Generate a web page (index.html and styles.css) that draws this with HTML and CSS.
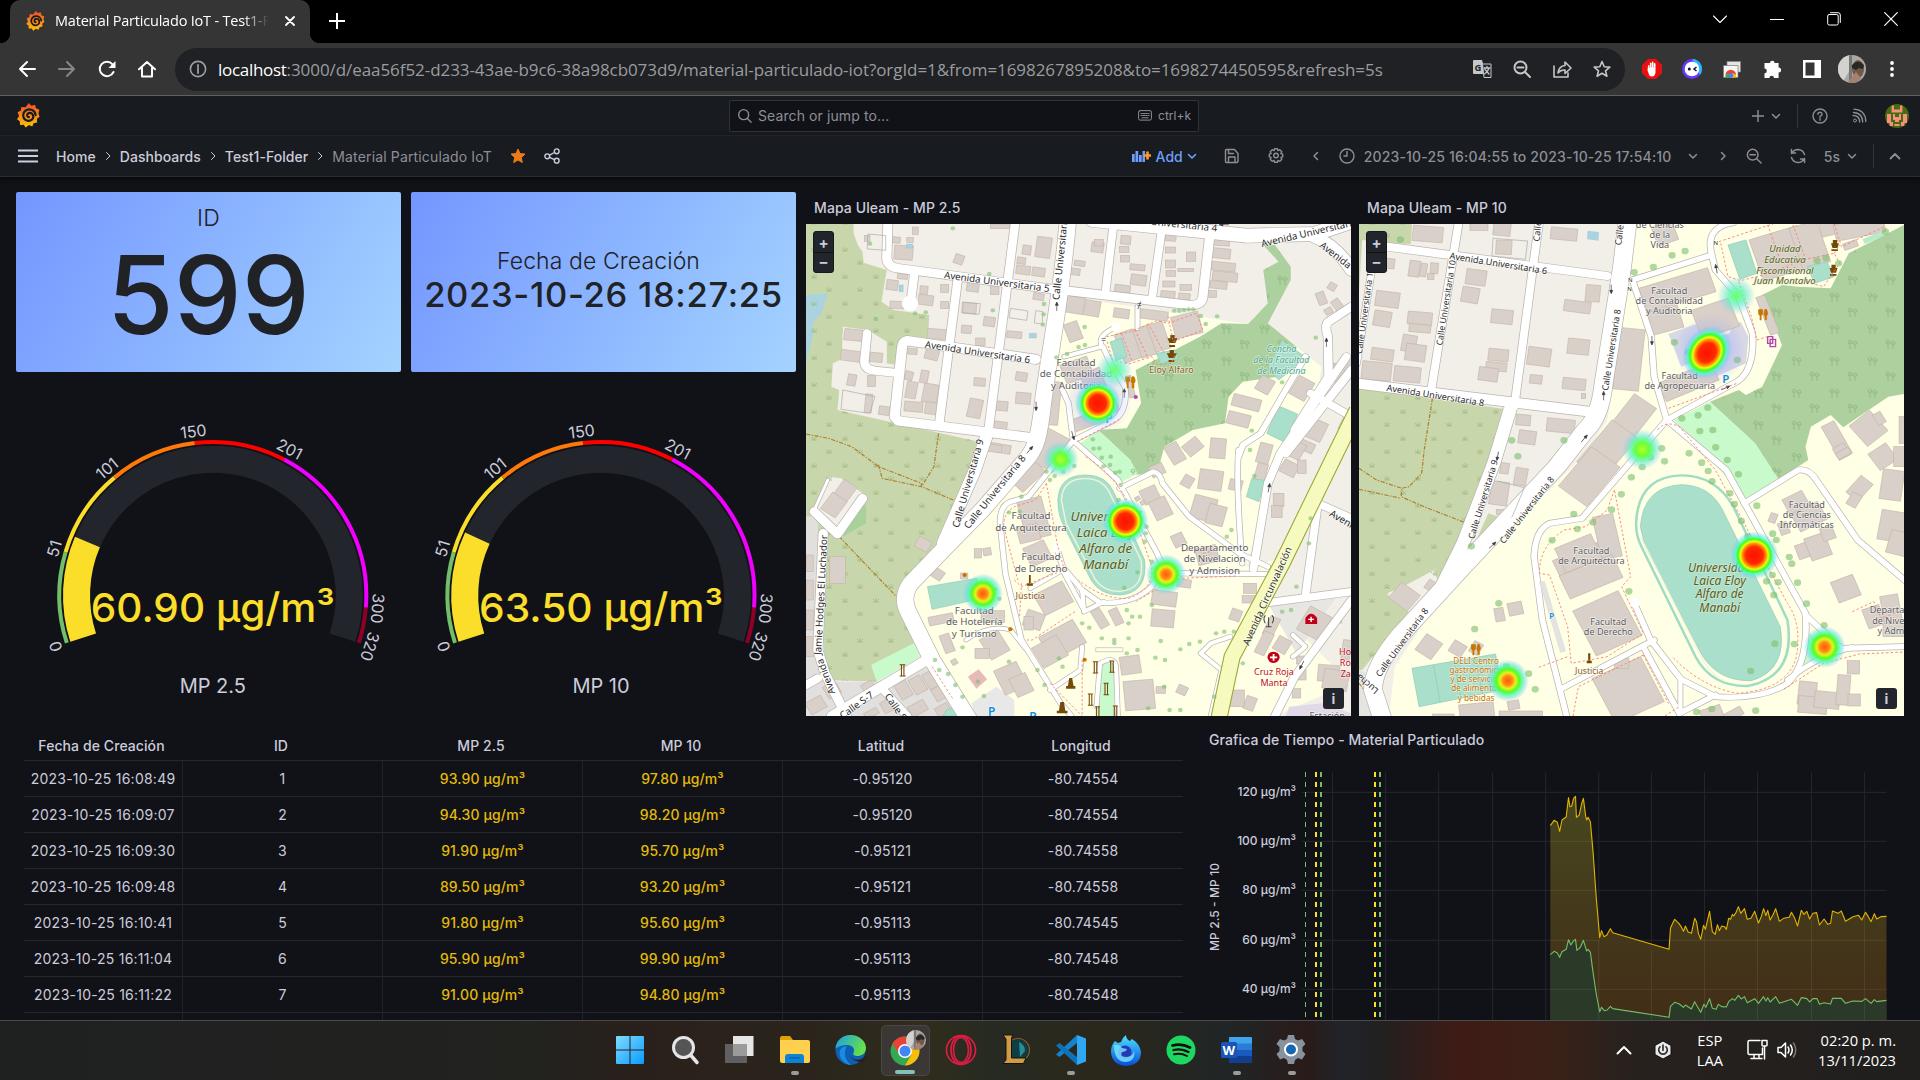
FILE: index.html
```html
<!DOCTYPE html>
<html lang="es">
<head>
<meta charset="utf-8">
<title>Material Particulado IoT</title>
<link rel="stylesheet" href="styles.css">
</head>
<body>
<svg class="defs" width="0" height="0">
  <defs>
    <linearGradient id="gLogo" x1="0" y1="0" x2="0" y2="1"><stop offset="0" stop-color="#f04e2a"/><stop offset="1" stop-color="#fcc30b"/></linearGradient>
    <symbol id="grafana" viewBox="0 0 24 26"><path fill="url(#gLogo)" d="M12.3 0l2.6 2.7 4-1 .9 3.8 3.6 1.6-1 3.7 1.2 3.6-2.8 2 .2 3.8-3.7.8-1.4 3.4-3.4-1.4-3.4 2.6-2.1-3-3.8.2-.3-3.8L0 16.800l2.200-3.300L.6 9.700l3.500-1.800.4-3.900 4.400.4z"/><path fill="none" stroke="#1a1b1f" stroke-width="2.300" stroke-linecap="round" d="M19.500 12.500c-.5-4-4-6-7-5.800-4 .3-6.300 3.300-6 6.600.3 3.500 3.200 5.600 6 5.300 3-.3 4.800-2.500 4.500-5-.3-2.300-2.200-3.600-4-3.400-1.700.2-2.600 1.600-2.400 2.900.2 1 1 1.600 1.800 1.500"/></symbol>
    <symbol id="down" viewBox="0 0 10 10"><path d="M1.500 3.500L5 7l3.500-3.500"/></symbol>
    <symbol id="right" viewBox="0 0 10 10"><path d="M3.500 1.500L7 5 3.500 8.500"/></symbol>
    <symbol id="mag" viewBox="0 0 18 18"><circle cx="8" cy="8" r="6"/><path d="M12.500 12.500L17 17"/></symbol>
    <symbol id="magout" viewBox="0 0 18 18"><circle cx="7.500" cy="7.500" r="6"/><path d="M12 12l5 5M4.500 7.500h6"/></symbol>
    <linearGradient id="fillY" x1="0" y1="0" x2="0" y2="1"><stop offset="0" stop-color="#46471f"/><stop offset="1" stop-color="#422d17"/></linearGradient>
    <pattern id="scrub" width="31" height="27" patternUnits="userSpaceOnUse"><path d="M8 8v-4M8 8l-3-3M8 8l3-3M5 8h6M23 21v-4M23 21l-3-3M23 21l3-3M20 21h6" stroke="#a3b883" fill="none" stroke-width=".8"/></pattern>
    <pattern id="wood" width="38" height="32" patternUnits="userSpaceOnUse"><path d="M8 14V8M6 8a2 3 0 1 1 4 0zM13 14V9M11 9a2 3 0 0 1 4 0zM26 29v-6M24 23a2 3 0 1 1 4 0zM31 29v-5M29 24a2 3 0 0 1 4 0z" stroke="#8bb37c" fill="none" stroke-width=".8"/></pattern>
    <radialGradient id="hot"><stop offset="0" stop-color="#f10"/><stop offset=".36" stop-color="#ff2a00"/><stop offset=".5" stop-color="#ff9a00"/><stop offset=".58" stop-color="#e8ff10"/><stop offset=".68" stop-color="#3dff20"/><stop offset=".8" stop-color="#50f5d0" stop-opacity=".75"/><stop offset="1" stop-color="#7ab8ff" stop-opacity="0"/></radialGradient>
    <radialGradient id="warm"><stop offset="0" stop-color="#ff5a10"/><stop offset=".22" stop-color="#ff8a10"/><stop offset=".38" stop-color="#e8f020"/><stop offset=".55" stop-color="#50ff20"/><stop offset=".73" stop-color="#50f5c0" stop-opacity=".75"/><stop offset="1" stop-color="#7ab8ff" stop-opacity="0"/></radialGradient>
    <radialGradient id="mild"><stop offset="0" stop-color="#b8ff20"/><stop offset=".35" stop-color="#66ff40"/><stop offset=".6" stop-color="#60f5b8" stop-opacity=".8"/><stop offset="1" stop-color="#7ac8ff" stop-opacity="0"/></radialGradient>
    <radialGradient id="cool"><stop offset="0" stop-color="#70ff60"/><stop offset=".4" stop-color="#60f8b8" stop-opacity=".8"/><stop offset="1" stop-color="#7ac8ff" stop-opacity="0"/></radialGradient>
    <radialGradient id="haze"><stop offset="0" stop-color="#8c9cff" stop-opacity=".38"/><stop offset=".6" stop-color="#8c9cff" stop-opacity=".25"/><stop offset="1" stop-color="#8c9cff" stop-opacity="0"/></radialGradient>
    <linearGradient id="blue" x1="0" y1="0" x2="1" y2="1"><stop offset="0" stop-color="#7fdcff"/><stop offset="1" stop-color="#0a9bff"/></linearGradient>
    <linearGradient id="edgeG" x1="0" y1="0" x2="1" y2=".3"><stop offset="0" stop-color="#1a9de8"/><stop offset="1" stop-color="#64e04c"/></linearGradient>
    <linearGradient id="fox" x1="0" y1="0" x2="0" y2="1"><stop offset="0" stop-color="#4be4ff"/><stop offset="1" stop-color="#0a4ad8"/></linearGradient>
    <clipPath id="round"><circle cx="14" cy="14" r="14"/></clipPath>
    <symbol id="photo" viewBox="0 0 28 28"><g clip-path="url(#round)"><path fill="#a9a8a4" d="M0 0h28v28H0z"/><path fill="#d2d2cf" d="M3 0h9v15L4 28H0V10z"/><path fill="#777" d="M11 0h3v28h-3z"/><ellipse cx="20" cy="14" rx="6" ry="9" fill="#73584a"/><path fill="#292626" d="M14 10q6-7 12 0l-1 4-4-1-3 2-4-2z"/><path fill="#a58270" d="M10 27l8-10 5 6-5 7z"/></g></symbol>
  </defs>
</svg>

<header class="tabstrip">
  <div class="tab">
    <svg class="fav" width="19" height="20"><use href="#grafana"/></svg>
    <span class="tab-title">Material Particulado IoT - Test1-Folder</span>
    <svg class="line white tab-x" width="10" height="10" viewBox="0 0 10 10"><path stroke-width="1.800" d="M1 1l8 8M9 1L1 9"/></svg>
  </div>
  <svg class="line white newtab" width="16" height="16" viewBox="0 0 16 16"><path stroke-width="2" d="M8 .5v15M.5 8h15"/></svg>
  <div class="winctl">
    <svg class="line white" width="14" height="14" viewBox="0 0 14 14"><path stroke-width="1.100" d="M.5 4L7 10.500 13.500 4"/></svg>
    <svg class="line white" width="14" height="14" viewBox="0 0 14 14"><path d="M.5 7.500h13" stroke-width="1.200"/></svg>
    <svg class="line white" width="14" height="14" viewBox="0 0 14 14"><rect x=".7" y="2.500" width="10.500" height="10.500" rx="1.500"/><path d="M3.500.7h7.500q2.300 0 2.300 2.300v7.500"/></svg>
    <svg class="line white" width="14" height="14" viewBox="0 0 14 14"><path stroke-width="1.200" d="M.7.7l12.600 12.600M13.300.7L.7 13.300"/></svg>
  </div>
</header>

<div class="toolbar">
  <div class="cells">
    <svg class="line white" width="18" height="18" viewBox="0 0 18 18"><path stroke-width="2" d="M17 9H2M9 2L2 9l7 7"/></svg>
    <svg class="line dim" width="18" height="18" viewBox="0 0 18 18"><path stroke-width="2" d="M1 9h15M9 2l7 7-7 7"/></svg>
    <svg class="line white" width="18" height="18" viewBox="0 0 18 18"><path stroke-width="2" d="M15.500 12A7.200 7.200 0 1 1 14.500 4.300"/><path fill="#fff" stroke="none" d="M17.500 1v7h-7z"/></svg>
    <svg class="line white" width="18" height="18" viewBox="0 0 18 18"><path stroke-width="2" d="M1 9.300L9 2l8 7.300M4 8v8.500h10V8"/></svg>
  </div>
  <div class="omnibox">
    <svg class="line info" width="18" height="18" viewBox="0 0 18 18"><circle cx="9" cy="9" r="7.600" stroke-width="1.600"/><path stroke-width="1.800" d="M9 8v5M9 4.800v1.600"/></svg>
    <div class="url"><b>localhost</b>:3000/d/eaa56f52-d233-43ae-b9c6-38a98cb073d9/material-particulado-iot?orgId=1&amp;from=1698267895208&amp;to=1698274450595&amp;refresh=5s</div>
    <div class="cells grey">
      <svg width="19" height="19" viewBox="0 0 19 19"><path fill="#c6c6c6" d="M1 0h8l4 14H1q-1 0-1-1V1q0-1 1-1z"/><path fill="#242527" stroke="#c6c6c6" d="M9.500 4H18v13.500H11z"/><path class="line" stroke="#c6c6c6" stroke-width="1.300" d="M11 8h6M14 6.500V8M16 8q-1 4-4.500 6M12 9.500l4 4.500"/><text x="1.500" y="10.500" font-size="9.500" font-weight="700" fill="#242527">G</text></svg>
      <svg class="line" width="18" height="18"><use href="#magout" stroke-width="2"/></svg>
      <svg class="line" width="19" height="18" viewBox="0 0 19 18"><path stroke-width="1.600" d="M1 6v11h14v-4M5 13q1-7 7-7.500V2l6 6-6 5.500V10q-4-.5-7 3z"/></svg>
      <svg class="line" width="18" height="18" viewBox="0 0 18 18"><path stroke-width="1.600" d="M9 1.500l2.200 5.200 5.600.4-4.300 3.700 1.400 5.500L9 13.300l-4.900 3 1.400-5.500L1.200 7.100l5.600-.4z"/></svg>
    </div>
  </div>
  <div class="cells ext">
    <svg width="20" height="20" viewBox="0 0 20 20"><path fill="#e9100f" d="M6 0h8l6 6v8l-6 6H6l-6-6V6z"/><path fill="#fff" d="M6 6.500q.8-.8 1.500 0V9h.4V4q.8-1 1.600 0v4.500h.4V3q.8-1 1.600 0v5.500h.4V4.500q.8-1 1.600 0v9Q13 17.500 10 17.500T6.500 14l-1-2.500z"/></svg>
    <svg width="20" height="20" viewBox="0 0 20 20"><circle cx="10" cy="10" r="10" fill="#6638ff"/><path fill="#24b8ff" d="M10 0a10 10 0 0 1 8 16z"/><circle cx="10" cy="10" r="7.300" fill="#fff"/><circle cx="7.300" cy="10" r="1.500" fill="#101030"/><path stroke="#101030" stroke-width="1.500" fill="none" d="M14.500 8L12 10l2.500 2"/></svg>
    <svg width="18" height="17" viewBox="0 0 18 17"><path fill="#e4e4e4" stroke="#888" stroke-width=".7" d="M4 .5h13.500V11H4z"/><path fill="#f6f6f6" stroke="#777" stroke-width=".7" d="M.5 4.500H15v12H.5z"/><path fill="#ea4335" d="M2.500 14a5.300 5.300 0 0 1 10.600 0L8 13z"/><path fill="#fbbc05" d="M9 12l4 1.500v3H9z"/><path fill="#34a853" d="M2.500 13.500L7 13v3.500H2.500z"/><circle cx="8" cy="14.300" r="2.200" fill="#4285f4"/></svg>
    <svg width="19" height="19" viewBox="0 0 19 19"><path fill="#fff" d="M7 3a2.300 2.300 0 0 1 4.600 0h4v4.500a2.400 2.400 0 0 1 0 5V18H11a2.300 2.300 0 0 0-4.600 0H1.500v-4.800a2.300 2.300 0 0 0 0-4.600V3z"/></svg>
    <svg width="18" height="18" viewBox="0 0 18 18"><path fill="#fff" d="M0 0h18v18H0z"/><path fill="#353535" d="M2.500 2.500h9v13h-9z"/></svg>
    <svg width="28" height="28"><use href="#photo"/></svg>
    <svg width="6" height="18" viewBox="0 0 6 18"><g fill="#fff"><circle cx="3" cy="3" r="1.900"/><circle cx="3" cy="9" r="1.900"/><circle cx="3" cy="15" r="1.900"/></g></svg>
  </div>
</div>

<nav class="topnav">
  <svg class="logo" width="23" height="25"><use href="#grafana"/></svg>
  <div class="search">
    <svg class="line" width="15" height="15"><use href="#mag" stroke-width="1.600"/></svg>
    <span>Search or jump to...</span>
    <svg class="line kb" width="14" height="11" viewBox="0 0 14 11"><rect x=".6" y=".6" width="12.800" height="9.500" rx="1.500"/><path d="M3 3.500h8M3 5.500h8" stroke-dasharray="1.300 1"/><path d="M4 7.800h6"/></svg>
    <small>ctrl+k</small>
  </div>
  <div class="top-actions">
    <svg class="line" width="12" height="12" viewBox="0 0 12 12"><path stroke-width="1.400" d="M6 0v12M0 6h12"/></svg>
    <svg class="line" width="10" height="10"><use href="#down" stroke-width="1.500"/></svg>
    <i class="rule"></i>
    <svg class="line" width="16" height="16" viewBox="0 0 16 16"><circle cx="8" cy="8" r="7" stroke-width="1.400"/><path stroke-width="1.400" d="M5.900 6.300q.2-2 2.100-2t2.100 1.900Q10 7.300 8 8.300v.9M8 10.800v1.400"/></svg>
    <svg class="line" width="15" height="15" viewBox="0 0 15 15"><circle cx="3" cy="12.500" r="1.500"/><path stroke-width="1.300" d="M1 7.500Q7.500 7.500 7.700 14M1.500 4.500Q10.500 5 10.700 14M2 1.200Q13.500 2 13.800 13.500"/></svg>
    <svg width="24" height="24" viewBox="0 0 12 12"><circle cx="6" cy="6" r="6" fill="#456a10"/><path fill="#f5907c" d="M3.300.7h1.200v2h3v-2h1.200v3.600H3.300zM1 5h2v4h1v2H2.300V9.500H1zM11 5H9v4H8v2h1.700V9.500H11zM4 5h1v1.500h2V5h1v3H7v1H5V8H4zM4.700 10h2.600v1H4.700z"/></svg>
  </div>
</nav>

<nav class="crumbs">
  <svg class="menu" width="20" height="14" viewBox="0 0 20 14"><path stroke="#ccccdc" stroke-width="1.800" d="M0 1.500h20M0 7h20M0 12.500h20"/></svg>
  <span>Home</span><svg class="line sep" width="10" height="10"><use href="#right"/></svg>
  <span>Dashboards</span><svg class="line sep" width="10" height="10"><use href="#right"/></svg>
  <span>Test1-Folder</span><svg class="line sep" width="10" height="10"><use href="#right"/></svg>
  <span class="current">Material Particulado IoT</span>
  <svg class="star" width="16" height="16" viewBox="0 0 16 16"><path fill="#eb7b18" stroke="#eb7b18" stroke-linejoin="round" d="M8 1l2 4.600 5 .5-3.700 3.400 1 5L8 12l-4.300 2.500 1-5L1 6.100l5-.5z"/></svg>
  <svg class="line share" width="16" height="16" viewBox="0 0 16 16"><g stroke-width="1.400"><circle cx="3.300" cy="8.300" r="2.400"/><circle cx="12.700" cy="3.300" r="2.400"/><circle cx="12.700" cy="12.700" r="2.400"/><path d="M5.500 7.200l5-2.700M5.500 9.400l5 2.300"/></g></svg>
  <div class="dash-actions">
    <svg width="19" height="12" viewBox="0 0 19 12"><path fill="#6e9fff" d="M0 4h2.700v8H0zM3.500 1h2.700v11H3.500zM7 5h2.700v7H7zM10.500 1h2.500v11h-2.500z"/><path stroke="#ff9830" stroke-width="2.600" d="M15.500 1.500v8M11.800 5.500H19"/></svg>
    <span class="add">Add</span>
    <svg class="line blue" width="10" height="10"><use href="#down" stroke-width="1.600"/></svg>
    <svg class="line" width="16" height="16" viewBox="0 0 16 16"><path stroke-width="1.400" d="M2.500 1.500h8l3.500 4v7.500q0 1.500-1.500 1.500h-10q-1 0-1-1v-11q0-1 1-1zM4.500 14v-5h6.500v5M4.500 1.500v4h5"/></svg>
    <svg class="line" width="16" height="16" viewBox="0 0 16 16"><circle cx="8" cy="7.500" r="2.300" stroke-width="1.400"/><path stroke-width="1.400" d="M6.600.8h2.800l.5 1.800 1.900-.9 2 2-.9 1.900 1.800.5v2.800l-1.800.5.9 1.900-2 2-1.900-.9-.5 1.800H6.600l-.5-1.800-1.900.9-2-2 .9-1.900-1.800-.5V6.100l1.800-.5-.9-1.900 2-2 1.900.9z"/></svg>
    <svg class="line" width="10" height="10" viewBox="0 0 10 10"><path stroke-width="1.500" d="M6.500 1.500L3 5l3.500 3.500"/></svg>
    <svg class="line" width="16" height="16" viewBox="0 0 16 16"><circle cx="8" cy="8" r="7" stroke-width="1.400"/><path stroke-width="1.400" d="M8 3.500V8H5"/></svg>
    <span class="range">2023-10-25 16:04:55 to 2023-10-25 17:54:10</span>
    <svg class="line" width="10" height="10"><use href="#down" stroke-width="1.500"/></svg>
    <svg class="line" width="10" height="10"><use href="#right" stroke-width="1.500"/></svg>
    <svg class="line" width="16" height="16"><use href="#magout" stroke-width="1.600"/></svg>
    <svg class="line" width="16" height="16" viewBox="0 0 16 16"><path stroke-width="1.500" d="M1.500 5.500v-4M1.500 5h4M2 5Q4 1.500 8 1.500q5 .2 6.500 5M14.500 10.500v4M14.500 11h-4M14 11q-2 3.500-6 3.500-5-.2-6.500-5"/></svg>
    <span>5s</span>
    <svg class="line" width="10" height="10"><use href="#down" stroke-width="1.500"/></svg>
    <i class="rule"></i>
    <svg class="line" width="12" height="12" viewBox="0 0 12 12"><path stroke-width="1.800" d="M1.500 8.500L6 4l4.500 4.500"/></svg>
  </div>
</nav>

<main class="dash">
  <section class="left">
    <div class="stat one"><span>ID</span><strong>599</strong></div>
    <div class="stat two"><span>Fecha de Creación</span><strong>2023-10-26 18:27:25</strong></div>
    <svg class="gauges" width="780" height="334" viewBox="16 382 780 334">
      <g id="gaugeA"></g>
      <g id="gaugeB"></g>
    </svg>
  </section>
  <section class="map-panel">
    <h2>Mapa Uleam - MP 2.5</h2>
    <div class="map">
      <svg id="map1" width="545" height="492" viewBox="806 224 545 492"></svg>
      <div class="zoomer"><b>+</b><b>–</b></div><div class="attr">i</div>
    </div>
  </section>
  <section class="map-panel second">
    <h2>Mapa Uleam - MP 10</h2>
    <div class="map">
      <svg id="map2" width="545" height="492" viewBox="1359 224 545 492"></svg>
      <div class="zoomer"><b>+</b><b>–</b></div><div class="attr">i</div>
    </div>
  </section>
  <section class="table-panel">
    <table>
      <thead><tr><th>Fecha de Creación</th><th>ID</th><th>MP 2.5</th><th>MP 10</th><th>Latitud</th><th>Longitud</th></tr></thead>
      <tbody>
        <tr><td>2023-10-25 16:08:49</td><td>1</td><td>93.90 μg/m³</td><td>97.80 μg/m³</td><td>-0.95120</td><td>-80.74554</td></tr>
        <tr><td>2023-10-25 16:09:07</td><td>2</td><td>94.30 μg/m³</td><td>98.20 μg/m³</td><td>-0.95120</td><td>-80.74554</td></tr>
        <tr><td>2023-10-25 16:09:30</td><td>3</td><td>91.90 μg/m³</td><td>95.70 μg/m³</td><td>-0.95121</td><td>-80.74558</td></tr>
        <tr><td>2023-10-25 16:09:48</td><td>4</td><td>89.50 μg/m³</td><td>93.20 μg/m³</td><td>-0.95121</td><td>-80.74558</td></tr>
        <tr><td>2023-10-25 16:10:41</td><td>5</td><td>91.80 μg/m³</td><td>95.60 μg/m³</td><td>-0.95113</td><td>-80.74545</td></tr>
        <tr><td>2023-10-25 16:11:04</td><td>6</td><td>95.90 μg/m³</td><td>99.90 μg/m³</td><td>-0.95113</td><td>-80.74548</td></tr>
        <tr><td>2023-10-25 16:11:22</td><td>7</td><td>91.00 μg/m³</td><td>94.80 μg/m³</td><td>-0.95113</td><td>-80.74548</td></tr>
        <tr><td></td><td></td><td></td><td></td><td></td><td></td></tr>
      </tbody>
    </table>
  </section>
  <section class="chart-panel">
    <h2>Grafica de Tiempo - Material Particulado</h2>
    <svg width="704" height="264" viewBox="1200 756 704 264">
      <g transform="translate(1190 720) scale(.46556 .33333)" class="plot">
        <path class="grid" d="M306 157V900M420 157V900M534 157V900M650 157V900M764 157V900M878 157V900M991 157V900M1105 157V900M1219 157V900M1335 157V900M1449 157V900M240 217H1496M240 364H1496M240 511H1496M240 661H1496M240 808H1496"/>
        <path id="areaY" fill="url(#fillY)"/><path id="areaG" fill="#2b3a28"/>
        <path class="grid over" d="M878 660V900M991 690V900M1105 640V900M1219 600V900M1335 600V900M1449 590V900M774 364H863M774 511H871M1032 661H1496M774 661H880M774 808H1496"/>
        <path id="lineY" class="series" stroke="#e0b400"/><path id="lineG" class="series" stroke="#73bf69"/>
      </g>
      <g stroke-dasharray="5 5"><path stroke="#73bf69" d="M1305.500 772V1017"/><path stroke="#fade2a" stroke-width="2" d="M1316 772V1017M1375 772V1017"/><path stroke="#73bf69" stroke-width="2" d="M1321 772V1017M1380 772V1017"/></g>
      <g class="axis"><text x="1296" y="796">120 μg/m³</text><text x="1296" y="845">100 μg/m³</text><text x="1296" y="894">80 μg/m³</text><text x="1296" y="944">60 μg/m³</text><text x="1296" y="993">40 μg/m³</text></g>
      <text class="ylabel" transform="translate(1219 907) rotate(-90)" textLength="88">MP 2.5 - MP 10</text>
    </svg>
  </section>
</main>

<footer class="taskbar">
  <div class="apps">
    <span><svg width="30" height="30" viewBox="0 0 30 30"><path fill="url(#blue)" d="M1 2q0-1 1-1h12.500v13.500H1zM15.500 1H28q1 0 1 1v12.500H15.500zM1 15.500h13.500V29H2q-1 0-1-1zM15.500 15.500H29V28q0 1-1 1H15.500z"/></svg></span>
    <span><svg width="30" height="30" viewBox="0 0 30 30"><circle cx="13.500" cy="12.500" r="10" fill="#555" stroke="#e6e6ea" stroke-width="3"/><path stroke="#e6e6ea" stroke-width="3.500" stroke-linecap="round" d="M21 20.500l6 7"/></svg></span>
    <span><svg width="30" height="30" viewBox="0 0 30 30"><path fill="#e6e6e6" d="M8 1h20.500v20H8z"/><path fill="#606062" d="M0 9h22v19H0z"/><path fill="#9b9b9b" d="M8 9h14v12H8z"/></svg></span>
    <span class="run"><svg width="30" height="30" viewBox="0 0 30 30"><path fill="#e0a106" d="M0 3q0-2 2-2h8l3 4v5H0z"/><path fill="#ffd04e" d="M0 5h28q2 0 2 2v19q0 2-2 2H2q-2 0-2-2z"/><path fill="#0b84d8" d="M5 28v-6q0-3 3-3h13q3 0 3 3v6z"/><path stroke="#0a5a9a" stroke-width="1.200" d="M9 23h11"/></svg></span>
    <span><svg width="31" height="30" viewBox="0 0 31 30"><circle cx="15.500" cy="15" r="15" fill="#0d5fb4"/><path fill="url(#edgeG)" d="M.5 14C1 5 8 0 15.500 0 24 0 31 6 31 13c0 6-5 8-8.500 8-3 0-5-1-4-3 2-4-1-8-6-8C7 10 2 12 .5 14z"/><path fill="#1b8be0" d="M12 11c-8 0-10 9-4 15 2 2 5 4 8 4-6-5-8-12-4-19z"/><path fill="#26221f" d="M14.500 20c2 4 7 6 12 4l4-3v4l-3 3-3-1c-5-1-9-4-10-7z"/></svg></span>
    <span class="run active"><svg width="36" height="38" viewBox="0 0 36 38"><circle cx="15" cy="23" r="14.500" fill="#34a853"/><path fill="#ea4335" d="M2.500 15.500A14.500 14.500 0 0 1 27.600 15.800L15 16z M2.500 15.500l7 11L15 16z"/><path fill="#fbbc05" d="M15 16h12.700A14.500 14.500 0 0 1 15 37.500l6.500-11z"/><circle cx="15" cy="23" r="7" fill="#fff"/><circle cx="15" cy="23" r="5.500" fill="#4285f4"/><svg x="16" y="2" width="20" height="20"><use href="#photo"/></svg></svg></span>
    <span><svg width="32" height="32" viewBox="0 0 32 32"><g fill="none" stroke="#e01b45" stroke-width="1.700"><circle cx="16" cy="16" r="14.500"/><ellipse cx="16" cy="16" rx="7.500" ry="12.500"/><ellipse cx="16" cy="16" rx="10" ry="14"/></g></svg></span>
    <span><svg width="28" height="32" viewBox="0 0 28 32"><circle cx="16" cy="16" r="10" fill="#0d3e46"/><circle cx="16" cy="16" r="11.500" fill="none" stroke="#87612f" stroke-width="1.200"/><path fill="#2b8b91" d="M17 8q6 3 6 9l-5 6z"/><path fill="#d39a45" stroke="#16120e" d="M1 1h10l-1.500 3v20H24l-2.500 5.500H1L4 26V5z"/></svg></span>
    <span class="run"><svg width="30" height="30" viewBox="0 0 30 30"><path fill="#1583cc" d="M21 0v8L3.500 22 0 19.500z"/><path fill="#0f72b8" d="M3.500 8L21 22v8L0 10.500z"/><path fill="#2fa8f4" d="M21 0l9 3.500v23L21 30z"/></svg></span>
    <span><svg width="30" height="31" viewBox="0 0 30 31"><path fill="url(#fox)" d="M4 6l3 2 3-1q2-5 5-7 0 4 4 6l2-2q8 5 9 13 0 13-15 14Q1 30 0 17q0-7 4-11z"/><circle cx="14" cy="17" r="6.500" fill="#2539b8"/><path fill="#7ce6ff" d="M3 10q5-1 8 3l5 1q-1 3-5 3-3 5 5 5 7-1 7-7 2 11-8 12Q3 27 3 10z" opacity=".8"/></svg></span>
    <span><svg width="30" height="30" viewBox="0 0 30 30"><circle cx="15" cy="15" r="14.500" fill="#1ed760"/><g stroke="#111" fill="none" stroke-linecap="round"><path stroke-width="2.800" d="M6.500 10.500q9-2.500 17.500 2"/><path stroke-width="2.300" d="M7.500 15q8-2 15 2"/><path stroke-width="2" d="M8 19.300q7-1.700 13 1.700"/></g></svg></span>
    <span class="run"><svg width="31" height="28" viewBox="0 0 31 28"><path fill="#41a5ee" d="M8 1h22q1 0 1 1v6H8z"/><path fill="#2b7cd3" d="M8 7.500h23V14H8z"/><path fill="#185abd" d="M8 14h23v6.500H8z"/><path fill="#103f91" d="M8 20.500h23V26q0 1-1 1H8z"/><rect y="6" width="16" height="16" rx="1.500" fill="#1a55b5"/><text x="1.500" y="18.500" fill="#fff" font-size="13" font-weight="700">W</text></svg></span>
    <span class="run"><svg width="30" height="30" viewBox="0 0 30 30"><path fill="#87929c" d="M12 0h6l1 4 3 1.500 4-1.500 3.500 5-3 3v4l3 3-3.500 5.500-4-1.500-3 2-1 4h-6l-1-4-3-2-4 1.500L.5 19l3-3v-4l-3-3L4 4l4 1.500L11 4z"/><circle cx="15" cy="14.500" r="6" fill="#1367b3" stroke="#fff" stroke-width="2"/></svg></span>
  </div>
  <div class="tray">
    <svg class="line white" width="16" height="10" viewBox="0 0 16 10"><path stroke-width="2" d="M1.500 8.500L8 2l6.500 6.500"/></svg>
    <svg width="18" height="20" viewBox="0 0 18 20"><path fill="#e9e9e9" stroke="#111" d="M9 1l8 4.500v9L9 19l-8-4.500v-9z"/><path fill="none" stroke="#333" stroke-width="1.700" stroke-linecap="round" d="M6 6.800a4.300 4.300 0 1 0 6 0M9 5.200v5"/></svg>
    <p>ESP<br>LAA</p>
    <svg class="line white" width="21" height="21" viewBox="0 0 21 21"><g stroke-width="1.500"><path d="M13 1.500H2.500q-1.500 0-1.500 1.500v11q0 1.500 1.500 1.500h13V9M4 19.500h11M7 16v3M12 16v3"/><path d="M15 1.500h5v4.500q0 1-1 1h-3q-1 0-1-1zM17.500 7v13"/></g></svg>
    <svg class="line white" width="21" height="18" viewBox="0 0 21 18"><g stroke-width="1.500"><path d="M1 6.500h3L8.500 2v14L4 11.500H1zM11 6q2 3 0 6M13.500 4q3.500 5 0 10"/><path stroke="#777" d="M16.500 2q4.500 7 0 14"/></g></svg>
    <p class="clock">02:20 p. m.<br>13/11/2023</p>
  </div>
</footer>
<script src="script.js"></script>
</body>
</html>
```
FILE: styles.css
```css
* { box-sizing: border-box; }
body { margin: 0; width: 1920px; height: 1080px; overflow: hidden; background: #111217; color: #ccccdc; font: 14px Inter, "Noto Sans", sans-serif; display: flex; flex-direction: column; }
svg { display: block; flex: none; }
.defs { position: absolute; }
.line { fill: none; stroke: currentColor; stroke-linecap: round; stroke-linejoin: round; }
.white { color: #fff; }
.dim { color: #868686; }

.tabstrip { height: 43px; background: #000; display: flex; align-items: center; font-family: "Open Sans", sans-serif; }
.tab { align-self: stretch; width: 300px; margin-left: 10px; background: #353535; border-radius: 10px 10px 0 0; display: flex; align-items: center; padding: 0 0 2px 16px; position: relative; }
.tab::before, .tab::after { content: ""; position: absolute; bottom: 0; width: 10px; height: 10px; }
.tab::before { left: -10px; background: radial-gradient(circle at 0 0, #000 10px, #353535 10.5px); }
.tab::after { right: -10px; background: radial-gradient(circle at 100% 0, #000 10px, #353535 10.5px); }
.tab-title { color: #fff; font-size: 14.5px; letter-spacing: -.2px; width: 214px; margin-left: 10px; white-space: nowrap; overflow: hidden; -webkit-mask-image: linear-gradient(90deg, #000 88%, transparent); mask-image: linear-gradient(90deg, #000 88%, transparent); }
.tab-x { margin-left: 16px; }
.newtab { margin-left: 19px; margin-bottom: 1px; }
.winctl { margin-left: auto; margin-right: 1px; display: grid; grid-template-columns: repeat(4, 57px); justify-items: center; padding-bottom: 6px; }

.toolbar { height: 53px; background: #353535; border-bottom: 1px solid #5f6062; display: flex; align-items: center; padding-left: 7px; }
.cells { display: grid; grid-auto-flow: column; grid-auto-columns: 40px; place-items: center; }
.omnibox { height: 43px; width: 1450px; margin-left: 8px; padding: 0 3px 0 14px; background: #202124; border-radius: 22px; display: flex; align-items: center; font-family: "Open Sans", sans-serif; }
.info { color: #9aa0a6; }
.url { margin-left: 11px; flex: 1; color: #9a9c9f; font-size: 17px; letter-spacing: -.065px; white-space: nowrap; }
.url b { color: #fff; font-weight: 400; letter-spacing: -.3px; }
.grey { color: #c6c6c6; }
.ext { margin-left: 7px; }

.topnav { height: 40px; background: #181b1f; border-bottom: 1px solid #2b2d32; display: flex; align-items: center; padding-left: 17px; color: #8e8e98; }
.search { width: 470px; height: 32px; margin-left: 689px; background: #111217; border: 1px solid #303238; border-radius: 2px; display: flex; align-items: center; padding: 0 7px; }
.search span { margin-left: 6px; letter-spacing: .1px; }
.search .kb { margin-left: auto; }
.search small { font-size: 12px; margin-left: 6px; }
.top-actions { margin-left: auto; display: grid; grid-template-columns: 19px 26px 15px 40px 33px 35px; align-items: center; }
.rule { display: block; width: 1px; height: 24px; background: #34363b; }

.crumbs { height: 41px; background: #181b1f; border-bottom: 1px solid #2b2d32; box-shadow: 0 1px 4px 1px #0008; display: flex; align-items: center; padding-left: 18px; font-weight: 500; letter-spacing: .05px; position: relative; }
.menu { margin-right: 18px; }
.sep { margin: 0 7px; }
.current { color: #8e8e98; font-weight: 400; letter-spacing: .15px; }
.star { margin-left: 18px; }
.share { margin-left: 18px; }
.dash-actions { margin-left: auto; color: #8e8e98; display: grid; grid-template-columns: 24px 31.5px 37px 44px 43px 28px 24.7px 324.3px 30px 28px 44px 33.7px 23.3px 26px 16px 31px; align-items: center; white-space: nowrap; }
.add, .blue { color: #6e9fff; }
.range { letter-spacing: .17px; }

.dash { height: 843px; padding: 15px 16px 0; display: grid; grid-template-columns: 780px 10px 378px 16px 151px 8px 545px; grid-template-rows: 524px 304px; overflow: hidden; }
.left { grid-column: 1; display: grid; grid-template-columns: 385px 385px; grid-template-rows: 180px 334px; gap: 10px; }
.stat { background: linear-gradient(120deg, #7396ff, #a4d3ff); border-radius: 2px; color: #202226; display: flex; flex-direction: column; align-items: center; white-space: nowrap; }
.stat span { font-size: 23px; line-height: 26px; font-weight: 300; letter-spacing: .1px; }
.stat strong { font-weight: 500; }
.one { padding-top: 13px; }
.one strong { font-size: 108px; line-height: 128px; }
.two { padding-top: 56px; }
.two span { margin-right: 10px; }
.two strong { font-size: 34.5px; line-height: 41px; letter-spacing: .7px; }
.gauges { grid-column: 1 / 3; }
.tick { font-size: 16px; fill: #ccccdc; text-anchor: middle; }
.reading { font-size: 40px; font-weight: 500; fill: #fade2a; text-anchor: middle; }
.caption { font-size: 20px; fill: #ccccdc; text-anchor: middle; }

h2 { margin: 0; height: 32px; line-height: 32px; font-size: 14px; font-weight: 500; letter-spacing: .1px; padding-left: 8px; }
.map-panel { grid-column: 3 / 6; }
.second { grid-column: 7; }
.map { position: relative; height: 492px; background: #f2efe9; }
.map > svg { overflow: hidden; }
.zoomer { position: absolute; left: 7px; top: 7px; width: 21px; height: 42px; background: #22252b; border: 1px solid #17181c; border-radius: 3px; }
.zoomer b { display: block; height: 20px; line-height: 21px; text-align: center; font-size: 15px; }
.zoomer b + b { border-top: 1px solid #111; line-height: 18px; }
.attr { position: absolute; right: 7px; bottom: 7px; width: 21px; height: 21px; line-height: 21px; text-align: center; background: #22252b; border-radius: 3px; font-weight: 700; }

.bld { fill: #d9d0c9; stroke: #c4b5a9; stroke-width: 1.8; }
.pitch { fill: #aae0cb; stroke: #8ccdb4; stroke-width: 2; }
.casing, .road { fill: none; stroke-linecap: round; stroke-linejoin: round; }
.casing { stroke: #b9b4ae; }
.road { stroke: #fff; }
.foot { fill: none; stroke: #fa8072; stroke-width: 2.6; stroke-dasharray: 7 6; }
.trail { fill: none; stroke: #b08030; stroke-width: 3.5; stroke-dasharray: 12 4 4 4; }
.tree { fill: #7fbf70; opacity: .62; }
.lbl { font-family: "Noto Sans", sans-serif; text-anchor: middle; paint-order: stroke; stroke: #fff9; stroke-width: 1.4px; stroke-linejoin: round; fill: #5c5c5c; }
.st { fill: #2c2c2c; }
.uni { fill: #5c5a1c; font-style: italic; stroke: #e4f2dc99; }
.brown { fill: #8a5a1c; }
.orange { fill: #c77400; }
.red { fill: #bf1020; }
.teal { fill: #4aa58c; font-style: italic; }
.park { fill: #0d8fd8; font-weight: 600; }

.table-panel { grid-column: 1 / 4; padding: 15px 0 0 8px; }
table { border-collapse: separate; border-spacing: 0; table-layout: fixed; width: 1159px; letter-spacing: .12px; }
th, td { height: 36px; padding: 0; text-align: center; border-bottom: 1px solid #26282d; white-space: nowrap; }
th { height: 30px; width: 200px; font-weight: 500; padding: 0 4px 0 0; letter-spacing: .08px; }
th:first-child { width: 159px; }
td { border-right: 1px solid #202227; }
td:first-child { letter-spacing: .24px; }
td:last-child { border-right: 0; }
td:nth-child(3), td:nth-child(4) { color: #e3bb0c; font-weight: 500; }
.chart-panel { grid-column: 5 / 8; padding-top: 8px; }
.chart-panel h2 { padding-left: 9px; }
.grid { fill: none; stroke: #25272c; vector-effect: non-scaling-stroke; }
.over { stroke: #ffffff14; }
.series { fill: none; vector-effect: non-scaling-stroke; stroke-width: 1.1; stroke-linejoin: round; }
.axis text { font-size: 12px; font-weight: 500; fill: #ccccdc; text-anchor: end; }
.ylabel { font-size: 12px; font-weight: 500; fill: #ccccdc; text-anchor: middle; }

.taskbar { height: 60px; border-top: 1px solid #4a4a4a; position: relative; background: linear-gradient(90deg, #1f2121 0, #22221f 28%, #2a201b 33%, #2a241c 42%, #302d1c 48%, #262a22 52%, #2b281b 57%, #202526 64%, #2a1b19 68%, #20242a 70%, #22201f 72%, #3f1b16 76%, #3a2118 81%, #27211e 85%, #201f1e 100%); font-family: "Open Sans", sans-serif; display: flex; padding: 0 0 1px 602px; }
.apps { display: grid; grid-template-columns: repeat(13, 55.17px); }
.apps span { display: grid; place-items: center; position: relative; }
.run::after { content: ""; position: absolute; bottom: 4px; left: 24px; width: 8px; height: 4px; border-radius: 2px; background: #9b9b9b; }
.active { background: #3a3735; border: 1px solid #4a4643; border-radius: 5px; margin: 4px 3px 3px; }
.active svg { margin: -8px 0 0 5px; }
.active::after { left: 13px; width: 20px; bottom: 1px; background: #86c1b5; }
.tray { margin-left: auto; margin-right: 24px; display: flex; align-items: center; color: #fff; font-size: 14.7px; line-height: 20px; padding-bottom: 1px; }
.tray svg:nth-child(2) { margin-left: 22px; }
.tray p { margin: 0; text-align: center; }
.tray p:nth-child(3) { margin: 0 24px 0 25px; }
.tray svg:nth-child(5) { margin-left: 9px; }
.tray .clock { text-align: right; width: 98px; }
```
FILE: script.js
```js
const el = (id) => document.getElementById(id);

/* ---- gauges ---- */
function gauge(id, cx, value, text, title) {
  const cy = 595.5;
  const at = (v) => 162 + (216 * v) / 320;
  const arc = (r, w, from, to, color) =>
    `<circle cx="${cx}" cy="${cy}" r="${r}" fill="none" stroke="${color}" stroke-width="${w}" pathLength="360" stroke-dasharray="${at(to) - at(from)} 360" transform="rotate(${at(from)} ${cx} ${cy})"/>`;
  const steps = [[0, 51, "#73bf69"], [51, 101, "#fade2a"], [101, 150, "#ff780a"], [150, 201, "#ff0000"], [201, 300, "#f200ff"], [300, 320, "#8f0026"]];
  let s = arc(136.3, 27, 0, 320, "#22252b") + arc(136.3, 27, 0, value, "#fade2a");
  steps.forEach(([a, b, c]) => { s += arc(153.5, 4, a, b, c); });
  [0, 51, 101, 150, 201, 300, 320].forEach((v) => {
    s += `<text class="tick" transform="translate(${cx} ${cy}) rotate(${at(v) + 90}) translate(0 -159.500)">${v}</text>`;
  });
  s += `<text class="reading" x="${cx}" y="622" textLength="244" lengthAdjust="spacingAndGlyphs">${text}</text><text class="caption" x="${cx}" y="692.500">${title}</text>`;
  el(id).innerHTML = s;
}
gauge("gaugeA", 212.8, 60.9, "60.90 μg/m³", "MP 2.5");
gauge("gaugeB", 601, 63.5, "63.50 μg/m³", "MP 10");

/* ---- time series ---- */
const mp10 = "774,317 782,301 789,307 794,334 799,300 808,291 813,233 816,260 820,258 824,235 828,229 830,292 836,285 841,252 845,235 850,290 852,300 855,292 860,305 866,400 873,540 880,653 884,632 889,650 895,646 903,626 908,638 1029,688 1032,625 1036,612 1041,598 1050,610 1055,620 1060,634 1064,618 1070,636 1077,640 1084,595 1088,605 1092,640 1097,658 1103,616 1107,628 1116,574 1122,635 1128,643 1133,614 1137,632 1142,618 1148,620 1152,628 1157,595 1161,598 1165,583 1168,588 1173,577 1178,560 1183,580 1191,566 1197,598 1205,595 1213,574 1221,609 1227,590 1232,566 1237,587 1241,571 1246,600 1252,585 1258,566 1266,604 1275,595 1287,592 1292,577 1299,595 1305,618 1313,571 1319,583 1325,574 1331,597 1338,580 1346,578 1352,615 1362,597 1370,613 1376,610 1380,573 1392,580 1399,573 1408,604 1424,590 1436,586 1443,600 1451,577 1457,590 1463,605 1470,581 1475,597 1484,590 1496,589";
const mp25 = "774,704 782,694 789,699 794,712 799,695 808,688 813,659 818,675 824,662 828,658 831,691 838,683 845,661 852,693 855,688 860,697 866,760 873,825 880,875 884,862 890,872 896,870 903,859 908,866 1029,892 1032,859 1041,847 1051,852 1060,862 1064,855 1077,867 1084,845 1090,860 1097,877 1104,853 1108,862 1116,836 1122,865 1130,868 1135,853 1142,860 1152,861 1157,845 1165,836 1170,841 1178,826 1184,837 1191,830 1197,848 1213,836 1221,850 1232,830 1237,843 1241,833 1246,846 1258,830 1266,850 1292,838 1305,856 1313,833 1325,836 1331,846 1338,836 1347,836 1352,853 1362,848 1376,852 1380,835 1399,835 1408,850 1424,843 1443,844 1451,836 1463,850 1470,839 1475,845 1496,841";
[["Y", mp10], ["G", mp25]].forEach(([k, pts]) => {
  el("line" + k).setAttribute("d", "M" + pts);
  el("area" + k).setAttribute("d", "M" + pts + " 1496,900 774,900Z");
});

/* ---- maps ---- */
function drawMap(id, ox, kx, m) {
  const px = (x) => ox + x / kx;
  const py = (y) => 190 + y / 3;
  let g = `<g transform="translate(${ox} 190) scale(${1 / kx} .33333)">`;
  let tint = "";
  m.areas.forEach(([c, d, pat]) => {
    g += `<path fill="${c}" d="M${d}Z"/>`;
    if (pat) tint += `<path fill="url(#${pat})" d="M${d.split(" ").map((p) => { const [x, y] = p.split(","); return px(+x) + "," + py(+y); }).join(" ")}Z"/>`;
  });
  g += `</g>${tint}<g transform="translate(${ox} 190) scale(${1 / kx} .33333)">`;
  m.buildings.trim().split(/\s+/).forEach((b) => {
    const [x, y, w, h, r = 0] = b.split(",").map(Number);
    g += `<rect class="bld" x="${x - w / 2}" y="${y - h / 2}" width="${w}" height="${h}" transform="rotate(${r} ${x} ${y})"/>`;
  });
  m.pitches.forEach((d) => { g += `<path class="pitch" d="M${d}Z"/>`; });
  m.trails.forEach((d) => { g += `<path class="trail" d="M${d}"/>`; });
  m.roads.forEach(([w, d]) => { g += `<path class="casing" stroke-width="${w + 4}" d="M${d}"/>`; });
  m.roads.forEach(([w, d]) => { g += `<path class="road" stroke-width="${w}" d="M${d}"/>`; });
  g += m.extra;
  m.arrows.forEach(([x, y, r]) => { g += `<path transform="translate(${x} ${y}) rotate(${r})" d="M0 13V-6M-4 -4L0 -14L4 -4Z" stroke="#3a3a3a" stroke-width="2" fill="#3a3a3a"/>`; });
  m.foot.forEach((d) => { g += `<path class="foot" d="M${d}"/>`; });
  m.trees.trim().split(/\s+/).forEach((t) => { const [x, y] = t.split(","); g += `<circle class="tree" cx="${x}" cy="${y}" r="${m.treeR}"/>`; });
  g += "</g>";
  m.labels.forEach(([x, y, rot, size, cls, text]) => {
    const lines = text.split("|");
    const lh = size * m.lead;
    g += `<text class="lbl ${cls}" font-size="${size}" transform="translate(${px(x)} ${py(y)}) rotate(${rot})">` +
      lines.map((t, i) => `<tspan x="0" y="${(i - (lines.length - 1) / 2) * lh + size * 0.36}">${t}</tspan>`).join("") + "</text>";
  });
  m.heat.forEach(([x, y, rx, k, ry = rx, r = 0]) => { g += `<ellipse rx="${rx}" ry="${ry}" fill="url(#${k})" transform="translate(${px(x)} ${py(y)}) rotate(${r})"/>`; });
  el(id).innerHTML = g;
}

drawMap("map1", 800, 2.8, {
  treeR: 6.5, lead: 1.19,
  areas: [
    ["#f2efe9", "17,102 1544,102 1544,1578 17,1578"],
    ["#c8d7ab", "17,102 150,102 150,130 162,165 175,185 178,218 243,240 228,335 262,360 362,375 358,445 300,440 275,470 270,525 243,520 243,455 190,420 120,410 118,480 112,510 92,520 88,590 110,600 105,660 250,695 520,760 490,820 420,1010 290,1190 275,1240 320,1360 200,1425 215,1475 75,1470 60,1300 45,980 17,980", "scrub"],
    ["#aad3df", "17,315 78,310 60,370 35,400 38,430 17,520"],
    ["#f2efe9", "80,860 115,865 190,920 105,1040 35,965"],
    ["#a9d19c", "150,950 185,945 185,1000 120,1040"],
    ["#e2e0df", "17,980 50,985 50,1400 75,1475 215,1475 350,1430 480,1578 17,1578"],
    ["#c8facc", "200,1425 320,1360 335,1400 215,1475"],
    ["#ffffe5", "745,320 1255,402 1310,400 1460,530 1440,700 1320,860 1250,1130 1330,1110 1310,1230 1540,1480 1330,1578 480,1578 320,1330 300,1220 420,1040 640,790 700,560"],
    ["#acd19e", "1297,165 1330,165 1374,230 1374,270 1310,400 1390,470 1340,560 1240,575 1200,620 1190,700 1100,720 1020,770 1000,850 925,855 925,810 835,720 915,715 955,640 940,540 1120,440 1180,400 1255,402 1310,340 1297,240 1340,215", "wood"],
    ["#c8facc", "835,720 785,760 895,880 945,850 925,810"],
    ["#c8facc", "845,1420 880,1420 880,1578 830,1578"],
    ["#e0d9e8", "1370,1550 1460,1540 1544,1570 1544,1578 1360,1578"],
    ["#e8e6e2", "1310,1240 1500,1225 1390,1390"],
    ["#e8e8e8", "480,1540 550,1490 600,1530 600,1578 490,1578"]
  ],
  buildings: `
    290,188,52,42,5 270,150,22,18,5 308,150,18,14 323,122,16,22 188,145,16,18 258,285,32,30,8 287,259,28,16,5 347,300,22,24,5 352,330,42,30,8 272,345,40,22,3 405,345,22,22 484,290,34,30,8 475,355,38,32,5 530,395,32,28,8 466,418,28,24,5 383,432,52,30,5 600,434,42,20,5 405,295,22,24 545,302,24,24 445,208,26,28,20 635,180,24,28,8 620,212,24,20,8 625,240,40,26,8 668,246,36,26,8 682,172,42,62,8 560,110,54,12 668,320,30,20,10 505,455,26,22
    833,172,34,30,8 783,220,30,16,8 770,245,28,20,8 837,158,24,20 912,150,28,26,5 908,178,26,18 910,206,26,20 945,232,42,18,5 948,270,44,32,8 903,296,44,22,8 960,116,22,18 1038,142,30,22,5 1037,180,28,18 1037,222,28,24 1038,250,26,18 1080,240,44,10 1095,200,26,28 1033,282,34,18 1030,315,40,24,5 1080,292,32,18 1076,320,32,20,5 1178,155,50,24,4 1178,190,55,30,6 1186,230,66,26,6 1190,260,70,28,6 1172,285,48,22,6 1152,312,28,20
    770,345,50,50,10 818,355,44,46,10 765,425,40,56,-20 900,370,44,28,8 990,375,80,28,8 920,468,54,90,-20 965,455,44,90,-18 1005,440,44,84,-18 1083,405,78,66,-14
    150,435,52,34,6 145,498,62,32,8 213,502,36,28,6 145,570,24,34,10 200,573,22,34 192,640,20,56,5 236,662,30,26,8 315,484,26,18,5 370,490,38,38,15 305,557,22,26,15 312,600,30,50,10 348,560,22,38,10 365,610,42,56,10 318,650,52,30,5 370,655,40,36,8 503,576,32,24,5 490,655,38,56,12 565,648,34,28,5 620,560,32,26,10 625,625,42,34,5 555,705,50,22,8 560,775,60,26,10
    710,640,34,130,5 775,540,80,60,-20 820,570,60,60,-20 810,690,110,38,-22 870,650,40,40,-20 700,780,80,110,30 925,590,16,66,-12 545,775,40,22,8
    1302,585,42,46,30 1250,638,80,36,15 1228,688,64,38,15 1405,595,50,62,30 1445,720,50,60,25 1420,770,40,30,25 1460,325,24,38,-20 1490,290,22,22,30 1505,345,24,36,-35 1480,363,22,18,-30 1170,775,44,60,5 1100,770,50,40,-40 1050,790,40,60,-30 1300,790,36,60,15 1530,700,30,50,25 1500,550,40,50,30 1530,520,30,40,30
    125,905,44,60,35 95,945,50,60,35 1000,840,40,34,-25 980,915,48,46,-25 1010,955,50,60,-25 945,926,14,12,-30 960,938,14,12,-30 1085,874,30,34,30 1150,870,66,60,8 1130,955,66,70,15 1165,975,50,60,15 1060,1050,34,38,-25 1140,1095,60,50,-15 1220,885,36,32,12 1290,850,30,60,15 1370,835,46,40,28 1390,780,40,50,28 1340,930,30,40 1335,965,30,36 1405,830,24,40
    640,860,90,44,-45 655,985,70,120,-14 640,1030,60,50,-14 665,1090,64,60,-25 710,1225,90,70,-28 655,1290,52,50,20 735,1350,110,80,-30 700,1385,80,70,-30 640,1300,26,40 840,1285,28,60,-30 885,1280,26,50,-25 385,1152,34,30,35 345,1063,40,34,30 498,1090,20,28 524,1085,22,22,-10 460,1158,20,18 395,1288,70,26,-12 540,1280,66,36 545,1365,60,70,-30 590,1465,70,80,-25 620,1485,50,60,-25 412,1360,28,56,-20 432,1416,16,16,-30 510,1390,40,30
    1020,1225,70,44,8 1016,1285,64,52,5 1075,1180,40,24,8 1260,1195,36,30 1258,1228,40,22 1220,1275,30,34,20 925,1425,56,54,-8 950,1515,84,88,-5 1010,1500,26,20 1070,1500,28,26,25 1440,1300,70,80,30 1320,1310,30,60,25 1300,1360,30,70,25 1350,1365,40,44,30 1405,1455,24,30 1390,1510,24,28 1480,1450,60,50,5 1530,1380,24,60,8 1510,1290,14,18 1405,1410,30,24 1260,1540,30,40,20 1500,1470,70,60,10 1220,1525,48,50
    27,1120,20,50 27,1200,20,60 27,1290,20,60 27,1370,20,60 105,1140,44,80 45,1545,50,40,-30 90,1500,40,40,-30 190,1490,34,26,-30 250,1545,44,36,-30 290,1500,36,50,-30 330,1485,36,50,-30 365,1470,30,50,-30 390,1510,34,40,-30 330,1555,50,34,-30 400,1560,40,30,-30 200,1570,40,20,-30`,
  pitches: [
    "868,456 900,445 915,500 885,512", "998,490 1050,480 1060,505 1010,522", "357,1190 495,1165 510,1225 370,1258",
    "1340,648 1393,672 1360,758 1307,730", "1265,865 1303,872 1285,935 1250,920", "1350,450 1420,505 1340,570 1310,530",
    "722,930 Q725,855 800,855 Q860,855 880,910 L965,1110 Q975,1210 895,1215 Q840,1215 815,1170 L735,1000 Q722,970 722,930",
    "400,1578 410,1560 440,1548 455,1578"
  ],
  trails: ["17,732 80,745 145,770 220,830 340,880 340,890 440,935", "388,730 375,830 340,890 230,865 220,825", "110,1040 270,1220"],
  roads: [
    [12, "740,500 L845,470 Q830,435 885,412"], [14, "848,470 L870,520 L910,590 Q918,660 880,690 L765,752 L640,920 L590,935 Q560,945 560,1000 L575,1150 L620,1350 L730,1540 L760,1578"],
    [14, "735,600 L752,640 L765,752 L890,870 L1000,1090 Q1020,1150 1070,1150 L1310,1152"], [14, "895,895 L990,845 Q1010,850 1015,880 L1090,980 L1230,1090 L1310,1130"],
    [12, "945,350 V415"], [14, "720,1075 L735,1130 L790,1200 L840,1238 Q930,1245 985,1190 L1010,1145"], [12, "790,1200 L795,1260 L735,1140 L645,1195"], [12, "795,1265 L850,1235"],
    [12, "790,1370 L785,1440 L700,1500"], [12, "830,1550 L840,1420 Q880,1395 885,1430 L890,1578"], [14, "1228,780 Q1220,880 1238,1120"], [22, "1530,500 L1345,790 L1310,880 L1270,1135"],
    [24, "1544,350 L1480,395 Q1468,405 1478,440 L1480,560 L1385,720"], [16, "1415,500 L1360,600 L1290,730 L1240,765 L1228,800"], [24, "1544,540 L1360,790"], [22, "1430,610 L1544,680"],
    [22, "1544,985 L1450,940 L1415,1220"], [22, "1310,1238 L1544,1205"], [22, "1544,1230 L1385,1460 L1330,1578"], [12, "1205,1340 L1150,1360 L1122,1390 L1180,1440 L1150,1578"], [12, "1380,1335 L1415,1370 L1380,1400"],
    [10, "465,1350 Q530,1300 590,1320 L630,1375"], [8, "78,870 40,960"],
    [26, "40,965 L105,1032 L175,925"], [26, "65,1030 L50,1380 L70,1450 L130,1578"], [30, "370,1400 L90,1578"], [24, "17,1485 L50,1465"], [22, "225,1490 L300,1578"],
    [42, "820,90 L1250,137 L1440,132 L1544,95"], [36, "1440,140 Q1500,165 1544,240"],
    [26, "246,102 L243,205 Q245,230 275,235 L705,297 L1090,345 Q1125,348 1128,320 L1148,130"], [24, "602,102 L525,745"], [24, "442,265 L390,700"], [22, "877,110 L855,310"], [22, "1013,120 L985,330"],
    [24, "320,250 L310,340"], [24, "188,430 L180,515 Q182,540 210,542 L265,548"], [28, "660,508 L300,452 Q285,455 285,480 L265,680 L275,693 L640,742"],
    [34, "520,745 L490,840 L400,1060"], [46, "750,90 C735,300 700,480 680,640 C670,740 660,770 640,800 L510,960 L400,1080 L310,1180 C290,1210 290,1240 305,1270 L370,1410 L480,1600"]
  ],
  arrows: [[719, 350, 0], [661, 648, 180], [1474, 458, 0], [908, 610, 0], [764, 736, 165], [643, 780, 38], [1405, 1425, 205], [1313, 894, 10], [1188, 104, -90]],
  extra: `<circle cx="308" cy="340" r="23" fill="#fff"/><circle cx="720" cy="1075" r="13" fill="#fff"/><circle cx="885" cy="412" r="13" fill="#fff"/>
    <path d="M1560 660L1500 790L1350 1120L1210 1400L1170 1600" fill="none" stroke="#9aa631" stroke-width="48"/><path d="M1560 660L1500 790L1350 1120L1210 1400L1170 1600" fill="none" stroke="#f7fabf" stroke-width="42"/>
    <path d="M732 930Q735 865 800 866Q850 866 870 915L955 1112Q965 1200 895 1204Q848 1204 825 1165L745 1000Z" fill="none" stroke="#f0f5d8" stroke-width="4"/>
    <g fill="none" stroke="#aaa" stroke-width="2"><path d="M590 355l48 8-3 28-50-8zM190 132l50 5v44l-52-4zM120 600l90 20-15 50-80-12zM455 336l50 5-4 32-48-5zM660 362l20 3-2 37-22-3z"/></g>
    <g fill="#aad3df" stroke="#8bbccc"><path d="M298 162h18v12h-18zM277 285h12v20h-12zM642 430h20v14h-20z"/></g>
    <g fill="#734a08"><path d="M1037 435h12v10h8l-6 14h-16l-6-14h8zM1034 465h16v6h-16zM1035 480h12v10h8l-6 14h-16l-6-14h8zM1032 510h16v6h-16zM754 1464h8l4 24h5v8h-26v-8h5zM729 1536h10l4 26h6v8h-30v-8h6zM641 1155h5v25h6v7h-17v-7h6z"/></g>
    <g stroke="#734a08" fill="none" stroke-width="3"><path d="M279 1424h16M279 1458h17M284 1424v34M291 1424v34M820 1415h14M820 1449h15M824 1415v34M831 1415v34M866 1413h14M866 1447h15M870 1413v34M877 1413v34M850 1480h14M850 1514h15M854 1480v34M861 1480v34M806 1512h14M806 1546h15M810 1512v34M817 1512v34M826 1550h14M830 1550v28M837 1550v28M876 1548h14M880 1548v30M887 1548v30"/></g>
    <path d="M912 560v10q0 6 4 6v18h3v-18q4 0 4-6v-10M917 560v12M930 560q-6 16 0 20v14h5v-14q7-6 0-20z" fill="#c77400" stroke="#c77400" stroke-width="2"/>
    <circle cx="1326" cy="1402" r="17" fill="#bf0016"/><path d="M1326 1392v20M1316 1402h20" stroke="#fff" stroke-width="5"/><path d="M1415 1302v-18q16-26 33 0v18z" fill="#bf0016"/><path d="M1431 1280v16M1423 1288h16" stroke="#fff" stroke-width="4"/>
    <circle cx="940" cy="621" r="6" fill="#b048b0"/><circle cx="461" cy="1155" r="6" fill="#c77400"/><circle cx="589" cy="1318" r="6" fill="#c77400"/><circle cx="797" cy="1409" r="6" fill="#c77400"/>
    <path d="M1312 1310v-28M1304 1310h16M1303 1300q-8-14 0-24M1322 1300q8-14 0-24" stroke="#444" fill="none" stroke-width="3"/>
    <path d="M828 1373h76v12h-76z" fill="none" stroke="#bbb" stroke-width="2"/><path d="M470 1460l30-22 24 30-30 28z" fill="#e7b9b9"/>`,
  foot: ["858,440 925,425 1000,392 1030,400 1110,370 1128,420 1045,455 1030,375", "860,455 875,510 920,522 985,500 1000,525 1040,520 1052,490", "900,430 930,515M938,420 975,505M975,400 1020,490", "775,755 L900,685", "690,880 L660,930 L600,950 Q570,970 570,1010 L610,1170 M690,880 L720,1060 L740,1140 L620,1190 L600,1170", "800,800 Q880,850 930,960 L985,1130 Q990,1200 920,1225 Q850,1230 780,1170", "770,1265 L650,1350 L635,1350", "1070,1165 L1225,1158", "940,1235 L1010,1190 L1070,1160", "620,1180 L615,1280", "370,1430 L430,1530", "700,1480 L790,1578 M790,1410 L790,1578", "1070,1085 L1110,1075 L1130,1090 L1165,1080"],
  trees: "212,387 322,370 352,367 196,161 428,115 530,252 540,361 683,342 682,373 680,404 797,411 780,471 798,465 748,492 718,502 1048,362 1062,362 1075,360 1088,358 1101,358 1122,378 1136,402 1168,379 1444,443 820,748 838,775 822,776 845,803 690,845 700,870 713,858 737,845 768,828 752,814 850,829 870,800 868,825 883,848 895,845 898,885 892,930 908,945 955,1000 968,1030 970,1010 955,985 965,1055 615,965 585,967 620,920 547,1198 558,1226 908,1193 945,1147 985,1115 985,1245 915,1260 930,1280 952,1280 920,1300 810,1313 845,1345 880,1350 920,1345 945,1380 880,1360 915,1390 1010,1353 1065,1378 1090,1362 1120,1355 1165,1330 1188,1325 995,1403 1022,1410 585,1415 665,1440 725,1405 685,1485 515,1518 975,1555 1035,1560 1065,1560 1160,1520 1215,1325 1240,1420 455,1372 378,1410 390,1440 415,1452 435,1485 455,1520 498,1475 790,1300 1020,1490 1430,985 1350,1265 1390,1190 1375,1260 1425,1060 1272,858 1350,577 1265,722 1260,780 1195,1040 1208,1020 735,1430",
  labels: [
    [551, 275, 7.5, 9.8, "st", "Avenida Universitaria 5"], [497, 486, 8.5, 9.8, "st", "Avenida Universitaria 6"], [728, 205, -84, 9.8, "st", "Calle Universitaria"], [1075, 104, 6, 9.8, "st", "Universitaria 4"],
    [1425, 128, -13, 9.8, "st", "Avenida Universitaria"], [1500, 195, 38, 9.8, "st", "Avenida"], [470, 880, -74, 9.8, "st", "Calle Universitaria 9"], [545, 905, -51, 9.8, "st", "Calle Universitaria 8"],
    [58, 1215, -87, 9.8, "st", "Jamie Hodges El Luchador"], [72, 1460, -110, 9.8, "st", "Avenida"], [158, 1545, -36, 9.8, "st", "Calle S-7"], [268, 1550, 55, 9.8, "st", "Calle S"],
    [1308, 1218, -66, 9.8, "st", "Avenida Circunvalación"], [1530, 995, 30, 9.8, "st", "Avenida"],
    [773, 551, 0, 9.8, "", "Facultad|de Contabilidad|y Auditoria"], [647, 995, 0, 9.8, "", "Facultad|de Arquitectura"], [675, 1117, 0, 9.8, "", "Facultad|de Derecho"], [488, 1295, 0, 9.8, "", "Facultad|de Hotelería|y Turismo"],
    [1161, 1106, 0, 9.8, "", "Departamento|de Nivelacion|y Admision"], [856, 1050, 0, 13.3, "uni", "Universidad|Laica Eloy|Alfaro de|Manabí"],
    [1040, 538, 0, 9, "brown", "Eloy Alfaro"], [645, 1216, 0, 9, "brown", "Justicia"], [1348, 509, 0, 9, "teal", "Concha|de la Facultad|de Medicina"], [1327, 1461, 0, 9, "red", "Cruz Roja|Manta"], [1540, 1418, 0, 9, "red", "Hosp|Rodr|Zam"],
    [865, 685, 0, 12, "park", "P"], [537, 1565, 0, 12, "park", "P"], [652, 1580, 0, 12, "park", "P"], [950, 344, 0, 9, "st", "≠"], [850, 448, 0, 9, "st", "="], [1476, 1577, 0, 9, "", "Estación"]
  ],
  heat: [[835, 630, 34, "haze"], [880, 540, 18, "cool"], [834, 640, 23, "hot"], [730, 808, 18, "mild"], [911, 994, 23, "hot"], [1025, 1153, 20, "warm"], [512, 1211, 20, "warm"]]
});

drawMap("map2", 1355, 2.775, {
  treeR: 10, lead: 1.12,
  areas: [
    ["#f2efe9", "11,102 1524,102 1524,1578 11,1578"],
    ["#c8d7ab", "11,102 158,102 155,162 90,158 20,150 11,310", "scrub"],
    ["#c8d7ab", "11,595 435,660 410,680 375,800 305,1090 235,1190 215,1150 90,1210 150,1265 20,1440 11,1440", "scrub"],
    ["#c8d7ab", "370,970 402,982 320,1090"],
    ["#f2efe9", "90,1215 220,1140 235,1190 155,1270"],
    ["#ffffe5", "780,102 1524,102 1524,1578 95,1578 110,1430 240,1220 640,790 700,690 740,420"],
    ["#acd19e", "1524,105 1370,190 1320,295 1230,290 1185,285 1130,315 1185,465 1130,590 1085,615 1065,600 985,635 1110,760 1175,868 1258,810 1250,770 1265,710 1320,675 1355,712 1480,620 1524,612", "wood"],
    ["#c8facc", "985,635 885,690 1085,925 1175,868 1110,760"],
    ["#d8d8e6", "870,432 945,402 980,450 1040,430 1045,408 1070,395 1092,440 1085,520 960,580 930,520 905,530"],
    ["#c8facc", "1255,1325 1340,1385 1245,1440"],
    ["#e6e4e0", "11,1440 60,1460 60,1578 11,1578"]
  ],
  buildings: `
    202,132,84,46,5 344,110,50,22 408,116,48,42,6 413,172,44,42,3 580,132,74,36,6 90,220,40,30,6 165,236,30,48,8 190,240,18,40,10 220,235,22,32,5 210,260,18,18 90,328,66,46,8 76,386,48,46,10 180,385,68,38,5 180,415,60,24,5 336,262,56,46,8 320,315,48,46,10 408,380,60,42,6 150,460,40,50,10 168,488,56,50,8 76,494,62,36,8 60,543,82,54,6 145,553,74,46,6 398,495,56,36,6 392,530,58,26,6 370,553,54,40,8 511,500,64,54,8 502,568,34,26,6 617,350,74,34,8 660,310,40,50,5 620,470,60,46,6 608,582,64,34,6 634,618,12,16
    467,690,40,32,5 571,707,78,40,6 478,742,48,40,8 760,508,72,185,6 860,130,60,60,-20 895,300,200,76,-18 860,390,90,70,-16 1000,385,110,90,-20 925,575,160,60,-24 765,690,76,140,36 700,780,90,160,38 650,860,100,150,38 1145,375,26,120,-20
    1180,190,140,130,-18 1262,165,80,130,-18 1320,110,60,50,-14 1400,115,140,50,-12 1375,165,40,20,-20
    1337,750,40,110,-28 1425,715,74,80,-40 1455,685,24,36,-30 1465,800,60,60,-35 1520,720,20,80 1350,785,36,40,-30 1400,895,44,66,40 1385,930,30,40,30 1490,885,60,90,8 1510,800,30,60 1500,1010,90,90,10 1510,1060,60,70,15
    1225,940,62,56,-28 1260,980,84,60,-28 1190,1015,26,36,-20 1160,984,20,28,20 1250,1080,50,44,-20 1285,1070,60,70,-20 1312,1030,36,40,-20 1362,1196,66,66,-22 1440,1280,50,60,-20 1490,1270,50,110,-10 1495,1320,60,40
    630,1125,140,90,-24 700,1040,58,130,-12 655,1160,160,76,-24 620,1090,110,80,-24 700,1300,140,150,-26 758,1500,150,150,-26 740,1420,40,30 205,1370,54,58,35 285,1376,40,38,32 336,1374,28,36,30 401,1274,26,40,-10 445,1256,40,38,-12 137,1220,66,60,38 210,1187,26,30,35 338,1565,96,50,-6 440,1545,32,26,-10 460,1578,120,30 245,1582,60,20
    415,835,24,32,8 460,860,34,52,10 400,910,50,70,8 402,966,20,16 1255,1510,50,70,6 1270,1545,80,50,5 1310,1530,70,50,6 1355,1500,36,90,4 1385,1530,34,36 1383,1432,34,40 990,1572,60,40,-20 1052,1572,50,26,-30 1355,790,40,20,-30`,
  pitches: [
    "1035,165 1085,150 1115,250 1068,268", "1255,230 1310,215 1330,260 1275,280", "158,1435 390,1392 408,1500 178,1550",
    "792,1010 Q800,890 905,884 Q985,885 1020,960 L1180,1310 Q1200,1440 1100,1472 Q1005,1475 960,1390 L805,1070"
  ],
  trails: ["215,625 192,780 185,850 150,890 130,895 128,920 180,945 310,1000", "11,835 60,870 130,895", "11,898 128,925", "11,1480 30,1505"],
  roads: [
    [16, "770,270 L990,195 Q970,110 1050,98"], [16, "990,195 L1000,240 L1065,320 L1103,430 Q1110,540 1060,575 L865,690 L630,985 L540,1000 Q500,1020 497,1100 L520,1290 L590,1590"],
    [16, "770,270 L822,440 L830,560 L865,690 L1030,840 L1250,1270 Q1260,1420 1200,1480 Q1130,1530 1000,1520 L905,1468 L820,1350 L775,1240"], [16, "1250,1275 L1350,1375 L1524,1370"], [14, "1200,1470 Q1280,1400 1380,1372"],
    [16, "1080,940 L1230,840 Q1260,835 1280,870 L1395,1050 L1530,1175"], [16, "575,1495 L830,1350"], [16, "800,1370 L900,1570 L1000,1515"], [12, "903,1468 V1570"],
    [24, "90,170 L700,258"], [30, "0,580 L650,665"], [22, "287,102 L210,610"], [22, "510,102 L442,650"], [18, "45,250 L5,520"],
    [36, "430,660 L385,820 L300,1060 L240,1190"], [50, "757,90 L740,240 L690,580 Q680,680 640,720 L560,830 L300,1130 L130,1330 Q50,1430 50,1500 L80,1600"]
  ],
  arrows: [[711, 297, 180], [690, 618, 0], [824, 451, 180], [1003, 237, -10], [396, 798, 190], [636, 746, 38], [1028, 594, 65], [381, 1066, 45]],
  extra: `<circle cx="775" cy="1238" r="15" fill="#fff"/>
    <path d="M780 1000Q785 860 905 856Q1000 855 1050 950L1200 1290Q1225 1460 1090 1488Q990 1490 945 1400L795 1070Q780 1040 780 1000Z" fill="none" stroke="#a0dcc4" stroke-width="7"/><path d="M792 1040L965 1410Q990 1460 1030 1475" fill="none" stroke="#f3f6dc" stroke-width="4"/>
    <path d="M383 145l96 8-6 55-93-10zM395 873l75 20-35 90" fill="none" stroke="#aaa" stroke-width="2"/><path d="M645 122l32 4-1 26-32-4z" fill="#aad3df"/><path d="M218 1425l18 112M276 1415l18 110M335 1405l18 108" stroke="#8ccdb4" stroke-width="2"/><path d="M512 1175h14l58 208-14 4z" fill="#e5e3e1" stroke="#ccc"/>
    <g fill="#734a08"><path d="M1326 150h12v10h5l-4 14h-14l-4-14h5zM1322 178h18v5h-18zM1322 224h12v10h5l-4 14h-14l-4-14h5zM1318 252h18v5h-18zM647 1390h6v22h4v8h-14v-8h4z"/></g>
    <g fill="#c77400" stroke="#c77400" stroke-width="2"><path d="M1120 358v12q0 6 4 6v14h3v-14q4 0 4-6v-12M1138 358q-6 16 0 20v11h4v-11q6-6 0-20zM323 1363v12q0 6 4 6v14h3v-14q4 0 4-6v-12M341 1363q-6 16 0 20v11h4v-11q6-6 0-20z"/></g>
    <path d="M1145 440h14v20h-14zM1152 448h15v22h-15z" fill="none" stroke="#b048b0" stroke-width="4"/>
    <g fill="#b8eac8"><path d="M1408 148l55-24 8 12-56 26z"/></g>`,
  foot: ["1010,155 1130,112 1160,102 M1015,160 1035,260 1070,272 1150,250 1240,210 1330,190 1345,220 1300,290 1250,275 M1145,105 1180,210 M1215,105 1250,205 M1330,102 1350,170 1470,110 M1330,190 1345,165", "1065,275 L1100,380 L1115,450 L1145,440", "870,655 L1060,580", "720,900 L700,960 L640,1010 L580,1020 Q510,1070 512,1150 L540,1155 L590,1310 L600,1420 L700,1400 L800,1330 L740,1190 L765,1160 L720,900", "840,720 Q860,690 900,710 L1000,840 L1100,1040 L1200,1240 Q1240,1300 1225,1400 Q1200,1500 1060,1510 Q960,1490 880,1400", "510,1432 L590,1400", "800,1395 L620,1490 L605,1578 M800,1395 L870,1540", "1190,1498 L1300,1420 L1400,1392 L1524,1386", "1380,1265 1440,1235 1460,1285 1520,1260", "860,1578 L900,1550"],
  trees: "126,149 880,196 916,183 828,231 775,247 886,457 924,487 1061,510 979,653 952,676 907,685 957,723 993,720 1001,772 1033,810 851,775 820,802 927,790 859,814 797,831 767,862 739,913 712,959 660,997 607,972 617,1017 547,1051 435,751 580,751 452,799 399,1240 332,1317 323,1069 962,818 980,843 991,874 1040,910 1064,853 1053,942 1072,993 1115,947 1090,1040 1159,1031 1169,1050 1205,1101 1212,1121 1158,1155 1142,1174 1174,1177 1228,1178 1162,1215 1253,1241 1302,1306 1219,1362 1165,1361 1098,1443 760,1204 420,1430 482,1451 500,1498 948,1566 990,1557 1112,1562 1282,212 1307,204 1342,220 1472,125",
  labels: [
    [398, 220, 9, 9.1, "st", "Avenida Universitaria 6"], [223, 616, 9, 9.1, "st", "Avenida Universitaria 8"], [252, 338, -81, 8.7, "st", "Calle Universitaria 10"], [27, 362, -82, 8.8, "st", "Calle Universitaria 11"],
    [507, 110, -84, 9.1, "st", "Calle U"], [733, 135, -84, 9.1, "st", "Calle"], [711, 480, -81, 8.8, "st", "Calle Universitaria 8"], [355, 928, -73, 8.8, "st", "Calle Universitaria 9"], [477, 960, -52, 8.8, "st", "Calle Universitaria 8"], [130, 1357, -54, 8.8, "st", "Calle Universitaria 8"], [18, 1468, -140, 9.1, "st", "Luchador"],
    [846, 135, 0, 9.1, "", "de Ciencias|de la|Vida"], [872, 332, 0, 9.1, "", "Facultad|de Contabilidad|y Auditoria"], [901, 572, 0, 9.1, "", "Facultad|de Agropecuaria"], [656, 1098, 0, 9.1, "", "Facultad|de Arquitectura"], [703, 1309, 0, 9.1, "", "Facultad|de Derecho"], [1254, 974, 0, 9.1, "", "Facultad|de Ciencias|Informáticas"], [1515, 1291, 0, 9.1, "", "Departamento|de Nivelacion|y Admision"],
    [1193, 224, 0, 9.6, "uni", "Unidad|Educativa|Fiscomisional|Juan Montalvo"], [1012, 1192, 0, 12, "uni", "Universidad|Laica Eloy|Alfaro de|Manabí"],
    [336, 1468, 0, 8.2, "orange", "DELI Centro|gastronómico|y de servicios|de alimentos|y bebidas"], [650, 1443, 0, 8.6, "brown", "Justicia"], [1029, 567, 0, 11.5, "park", "P"], [546, 1279, 0, 8, "park", "P"], [1001, 157, 0, 6, "st", "N"], [764, 268, 0, 6, "st", "N"], [762, 295, 0, 6, "st", "N"]
  ],
  heat: [[985, 480, 36, "haze"], [1058, 317, 19, "cool"], [977, 488, 23, "hot", 28, 35], [797, 778, 20, "mild"], [1108, 1096, 24, "hot"], [1303, 1371, 21, "warm"], [424, 1472, 21, "warm"]]
});
```
